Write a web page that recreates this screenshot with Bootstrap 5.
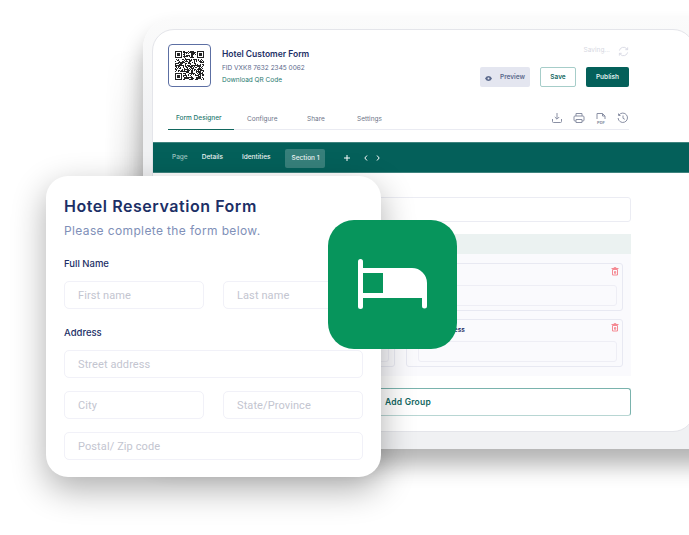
<!DOCTYPE html>
<html lang="en">
<head>
  <meta charset="UTF-8" />
  <meta name="viewport" content="width=device-width, initial-scale=1" />
  <title>Hotel Reservation Form</title>
  <link href="https://cdn.jsdelivr.net/npm/bootstrap@5.3.0/dist/css/bootstrap.min.css" rel="stylesheet" />
  <style>
    body { margin: 0; background: #fff; font-family: Inter, "Liberation Sans", sans-serif; overflow: hidden; }
    .stage { position: relative; width: 689px; height: 535px; overflow: hidden; }

    /* tablet window */
    .tablet-frame { position: absolute; left: 143px; top: 18px; width: 600px; height: 431px; padding: 11px 0 17px 10px;
      background: linear-gradient(#fbfbfb, #f0f1f3 25%); border-radius: 30px; box-shadow: 0 16px 22px rgba(0,0,0,.3); }
    .tablet-frame::before { content: ""; position: absolute; left: -38px; top: 30px; width: 38px; height: 300px;
      background: linear-gradient(to left, rgba(0,0,0,.18), rgba(0,0,0,0));
      -webkit-mask-image: linear-gradient(to bottom, transparent, #000 60%); mask-image: linear-gradient(to bottom, transparent, #000 60%); }
    .tablet { height: 100%; width: 543px; margin-left: -1px; background: #fff; border: 1px solid #e4e5ea; border-radius: 22px; overflow: hidden; }
    .tablet-head { padding: 14px 65px 0 15px; height: 74px; }
    .qr-box { width: 43px; height: 43px; border: 1px solid #5c6fa3; border-radius: 4px; }
    .head-text { padding-top: 5px; margin-left: 11px; }
    .form-title { font-size: 8.5px; font-weight: 600; color: #1c2f66; line-height: 11px; }
    .form-fid { font-size: 6.5px; color: #5c6a8c; line-height: 9px; margin-top: 4px; }
    .form-link { font-size: 6.5px; color: #1f7a70; line-height: 9px; margin-top: 3px; }
    .saving { font-size: 6.5px; color: #d6d8e2; height: 14px; }
    .head-buttons { margin-top: 9px; gap: 10px; }
    .btn-mini { height: 20px; font-size: 6.5px; font-weight: 600; padding: 2px 0 0; border-radius: 2px; --bs-btn-font-size: 6.5px; }
    .btn-preview { width: 50px; background: #e4e6f0; color: #5c6a8c; border: 0; }
    .btn-save { width: 36px; background: #fff; color: #12675f; border: 1px solid #a6cdc9; }
    .btn-publish { width: 43px; background: #04605a; color: #dfeeec; border: 0; }
    .tab-row { margin: 0 65px 0 15px; height: 26px; border-bottom: 1.5px solid #eaebf2; position: relative; }
    .tab-link { font-size: 6.5px; color: #6d7488; line-height: 26px; position: absolute; top: 2px; }
    .tab-on { left: 0; width: 66px; padding-left: 8px; top: -1px; height: 27px; line-height: 30px; color: #1f7a70; font-weight: 500; border-bottom: 1.5px solid #12675f; }
    .tab-icons { position: absolute; right: 0; top: 8px; gap: 10px; }
    .tool-bar { height: 31px; margin-top: 12px; background: #04605a; border-top: 1px solid #3e837e; border-bottom: 1px solid #3e837e;
      font-size: 6.5px; font-weight: 500; color: #eef5f4; padding-left: 19px; padding-top: 1px; }
    .bar-page { color: #9cc4c0; margin-right: 14px; }
    .bar-details { margin-right: 19px; }
    .bar-identities { margin-right: 15px; }
    .bar-pill { background: #37807b; border-radius: 2px; width: 40px; height: 19px; line-height: 19px; text-align: center; margin-right: 19px; }
    .bar-plus { margin-right: 14px; }
    .bar-prev { margin-right: 8px; }
    .tablet-body { padding: 24px 63px 0 15px; }
    .field-box { height: 25px; border: 1px solid #ebecf3; border-radius: 3px; }
    .panel-head { height: 20px; margin-top: 12px; background: #ebf2f1; }
    .panel-body { height: 122px; background: #fafafd; padding: 9px 8px 0 0; gap: 8px; }
    .sub-card { border: 1px solid #e8e9f2; border-radius: 3px; position: relative; height: 48px; }
    .sub-left { flex: 0 0 227px; }
    .sub-row { gap: 11px; }
    .sub-input { position: absolute; left: 11px; right: 5px; bottom: 4px; height: 21px; border: 1px solid #eeeef5; border-radius: 3px; }
    .sub-label { position: absolute; left: 12px; top: 6px; font-size: 6.5px; font-weight: 600; color: #1c2f66; white-space: nowrap; }
    .trash { position: absolute; right: 3px; top: 3px; }
    .add-group { height: 28px; margin-top: 12px; border: 1px solid #7ab3ad; border-bottom: 1.5px solid #b8d6d3; border-radius: 3px; background: #fff;
      color: #12675f; font-size: 8.5px; font-weight: 600; letter-spacing: .2px; padding-left: 23px; width: 100%; }

    /* floating form card */
    .form-card { position: absolute; left: 46px; top: 176px; width: 335px; height: 301px; padding: 21px 18px 0; background: #fff;
      border-radius: 22px; box-shadow: 0 12px 34px rgba(0,0,0,.32); }
    .card-heading { font-size: 16px; font-weight: 600; color: #1c2f66; letter-spacing: .55px; line-height: 19px; margin: 0; }
    .card-sub { font-size: 12px; color: #8090b8; letter-spacing: .37px; line-height: 15px; margin: 7px 0 0; }
    .group-label { font-size: 9.5px; font-weight: 500; color: #1c2f66; line-height: 12px; margin: 20px 0 11px; }
    .group-label-tight { margin-top: 18px; }
    .fake-input { height: 28px; border: 1px solid #f1f1f8; border-radius: 5px; padding: 0 13px; font-family: Roboto, sans-serif;
      font-size: 11px; line-height: 28px; color: #c3c5d0; background: #fff; letter-spacing: .1px; flex: 1 1 0; }
    .input-stack { gap: 13px; }
    .input-pair { gap: 19px; }

    .bed-tile { position: absolute; left: 328px; top: 220px; width: 129px; height: 129px; background: #07955c; border-radius: 26px; }
  </style>
</head>
<body>
<div class="stage">

  <!-- Tablet behind -->
  <div class="tablet-frame">
    <div class="tablet">
      <div class="tablet-head d-flex">
        <div class="qr-box d-flex align-items-center justify-content-center flex-shrink-0">
          <svg id="qr" width="29" height="29" viewBox="0 0 29 29" shape-rendering="crispEdges"></svg>
        </div>
        <div class="head-text flex-grow-1">
          <div class="form-title">Hotel Customer Form</div>
          <div class="form-fid">FID VXK8 7632 2345 0062</div>
          <div class="form-link">Download QR Code</div>
        </div>
        <div class="d-flex flex-column align-items-end">
          <div class="saving d-flex align-items-center gap-2">
            Saving...
            <svg width="11" height="11" viewBox="0 0 12 12" fill="none" stroke="#d6d8e2" stroke-width="1"><path d="M1.5 5a4.6 4.6 0 0 1 8-2l1 1M10.5 7a4.6 4.6 0 0 1-8 2l-1-1M10.5 1.5V4H8M1.5 10.5V8H4"/></svg>
          </div>
          <div class="d-flex head-buttons">
            <button class="btn btn-mini btn-preview d-flex align-items-center justify-content-center gap-2">
              <svg width="7" height="5" viewBox="0 0 14 10"><path d="M0 5c2-3.4 4.4-5 7-5s5 1.600 7 5c-2 3.400-4.400 5-7 5S2 8.400 0 5z" fill="#5c6a8c"/><circle cx="7" cy="5" r="2" fill="#e4e6f0"/></svg>
              Preview
            </button>
            <button class="btn btn-mini btn-save">Save</button>
            <button class="btn btn-mini btn-publish">Publish</button>
          </div>
        </div>
      </div>

      <div class="tab-row">
        <span class="tab-link tab-on">Form Designer</span>
        <span class="tab-link" style="left:79px">Configure</span>
        <span class="tab-link" style="left:139px">Share</span>
        <span class="tab-link" style="left:189px">Settings</span>
        <div class="tab-icons d-flex">
          <svg width="12" height="12" viewBox="0 0 12 12" fill="none" stroke="#8a90a4" stroke-width="1"><path d="M6 1v6M3.800 5 6 7.200 8.200 5M1.500 7v2.500a1 1 0 0 0 1 1h7a1 1 0 0 0 1-1V7"/></svg>
          <svg width="12" height="12" viewBox="0 0 12 12" fill="none" stroke="#8a90a4" stroke-width="1"><path d="M3 4V1.500h6V4M3 9H2a1 1 0 0 1-1-1V5a1 1 0 0 1 1-1h8a1 1 0 0 1 1 1v3a1 1 0 0 1-1 1H9M3 7.500h6v3H3z"/></svg>
          <svg width="12" height="12" viewBox="0 0 12 12" fill="none" stroke="#8a90a4" stroke-width="1"><path d="M2 7V1.500h5.500L10 4v3M7.500 1.500V4H10"/><text x="6" y="11.500" font-size="4" font-weight="700" fill="#8a90a4" stroke="none" text-anchor="middle" font-family="Inter, sans-serif">PDF</text></svg>
          <svg width="12" height="12" viewBox="0 0 12 12" fill="none" stroke="#8a90a4" stroke-width="1"><path d="M2 3a4.700 4.700 0 1 1-.9 3M1.500 1.500V3.500h2M6 3.500V6.300l1.800 1"/></svg>
        </div>
      </div>

      <div class="tool-bar d-flex align-items-center">
        <span class="bar-page">Page</span>
        <span class="bar-details">Details</span>
        <span class="bar-identities">Identities</span>
        <span class="bar-pill">Section 1</span>
        <svg class="bar-plus" width="6" height="6" viewBox="0 0 6 6" stroke="#fff" stroke-width="1"><path d="M3 0v6M0 3h6"/></svg>
        <svg class="bar-prev" width="4" height="6" viewBox="0 0 4 6" fill="none" stroke="#fff" stroke-width="1"><path d="M3 .5.800 3 3 5.500"/></svg>
        <svg width="4" height="6" viewBox="0 0 4 6" fill="none" stroke="#fff" stroke-width="1"><path d="M1 .5 3.200 3 1 5.500"/></svg>
      </div>

      <div class="tablet-body">
        <div class="field-box"></div>
        <div class="panel-head"></div>
        <div class="panel-body d-flex flex-column">
          <div class="sub-card">
            <svg class="trash" width="8" height="9" viewBox="0 0 8 9" fill="none" stroke="#f58a93" stroke-width="1"><path d="M1.500 2.500h5V8h-5zM.5 1.500h7M3 1.500V.700h2v.8M3.500 4.500h1.200v1.800H3.500z"/></svg>
            <div class="sub-input"></div>
          </div>
          <div class="d-flex sub-row">
            <div class="sub-card sub-left"><div class="sub-input"></div></div>
            <div class="sub-card flex-grow-1">
              <span class="sub-label">Street address</span>
              <svg class="trash" width="8" height="9" viewBox="0 0 8 9" fill="none" stroke="#f58a93" stroke-width="1"><path d="M1.500 2.500h5V8h-5zM.5 1.500h7M3 1.500V.700h2v.8M3.500 4.500h1.200v1.800H3.500z"/></svg>
              <div class="sub-input"></div>
            </div>
          </div>
        </div>
        <button class="add-group">Add Group</button>
      </div>
    </div>
  </div>

  <!-- Form card -->
  <div class="form-card">
    <h1 class="card-heading">Hotel Reservation Form</h1>
    <p class="card-sub">Please complete the form below.</p>

    <p class="group-label">Full Name</p>
    <div class="d-flex input-pair">
      <div class="fake-input">First name</div>
      <div class="fake-input">Last name</div>
    </div>

    <p class="group-label group-label-tight">Address</p>
    <div class="d-flex flex-column input-stack">
      <div class="fake-input flex-grow-0">Street address</div>
      <div class="d-flex input-pair">
        <div class="fake-input">City</div>
        <div class="fake-input">State/Province</div>
      </div>
      <div class="fake-input flex-grow-0">Postal/ Zip code</div>
    </div>
  </div>

  <!-- Bed tile -->
  <div class="bed-tile">
    <svg width="129" height="129" viewBox="0 0 129 129">
      <rect x="30" y="39" width="5" height="50" rx="2.500" fill="#fff"/>
      <path d="M35 48H84a15 15 0 0 1 15 15V86a2.500 2.500 0 0 1-5 0V78H35V73H55V53H35z" fill="#fff"/>
    </svg>
  </div>
</div>

<script src="https://cdn.jsdelivr.net/npm/bootstrap@5.3.0/dist/js/bootstrap.bundle.min.js"></script>
<script>
  // draws a QR-looking grid, fixed seed so it comes out the same every time
  const size = 29;
  let seed = 73;
  let d = '';
  const isFinder = (x, y) => (x < 8 && y < 8) || (x > 20 && y < 8) || (x < 8 && y > 20);
  const finder = (ox, oy) => `M${ox} ${oy}h7v7h-7zM${ox + 1} ${oy + 1}v5h5v-5zM${ox + 2} ${oy + 2}h3v3h-3z`;
  for (let y = 0; y < size; y++) {
    for (let x = 0; x < size; x++) {
      seed = (seed * 1103515245 + 12345) & 0x7fffffff;
      if (!isFinder(x, y) && (seed >> 16) % 100 < 52) d += `M${x} ${y}h1v1h-1z`;
    }
  }
  d += finder(0, 0) + finder(22, 0) + finder(0, 22);
  const path = document.createElementNS('http://www.w3.org/2000/svg', 'path');
  path.setAttribute('d', d);
  path.setAttribute('fill', '#222');
  path.setAttribute('fill-rule', 'evenodd');
  document.getElementById('qr').appendChild(path);
</script>
</body>
</html>
